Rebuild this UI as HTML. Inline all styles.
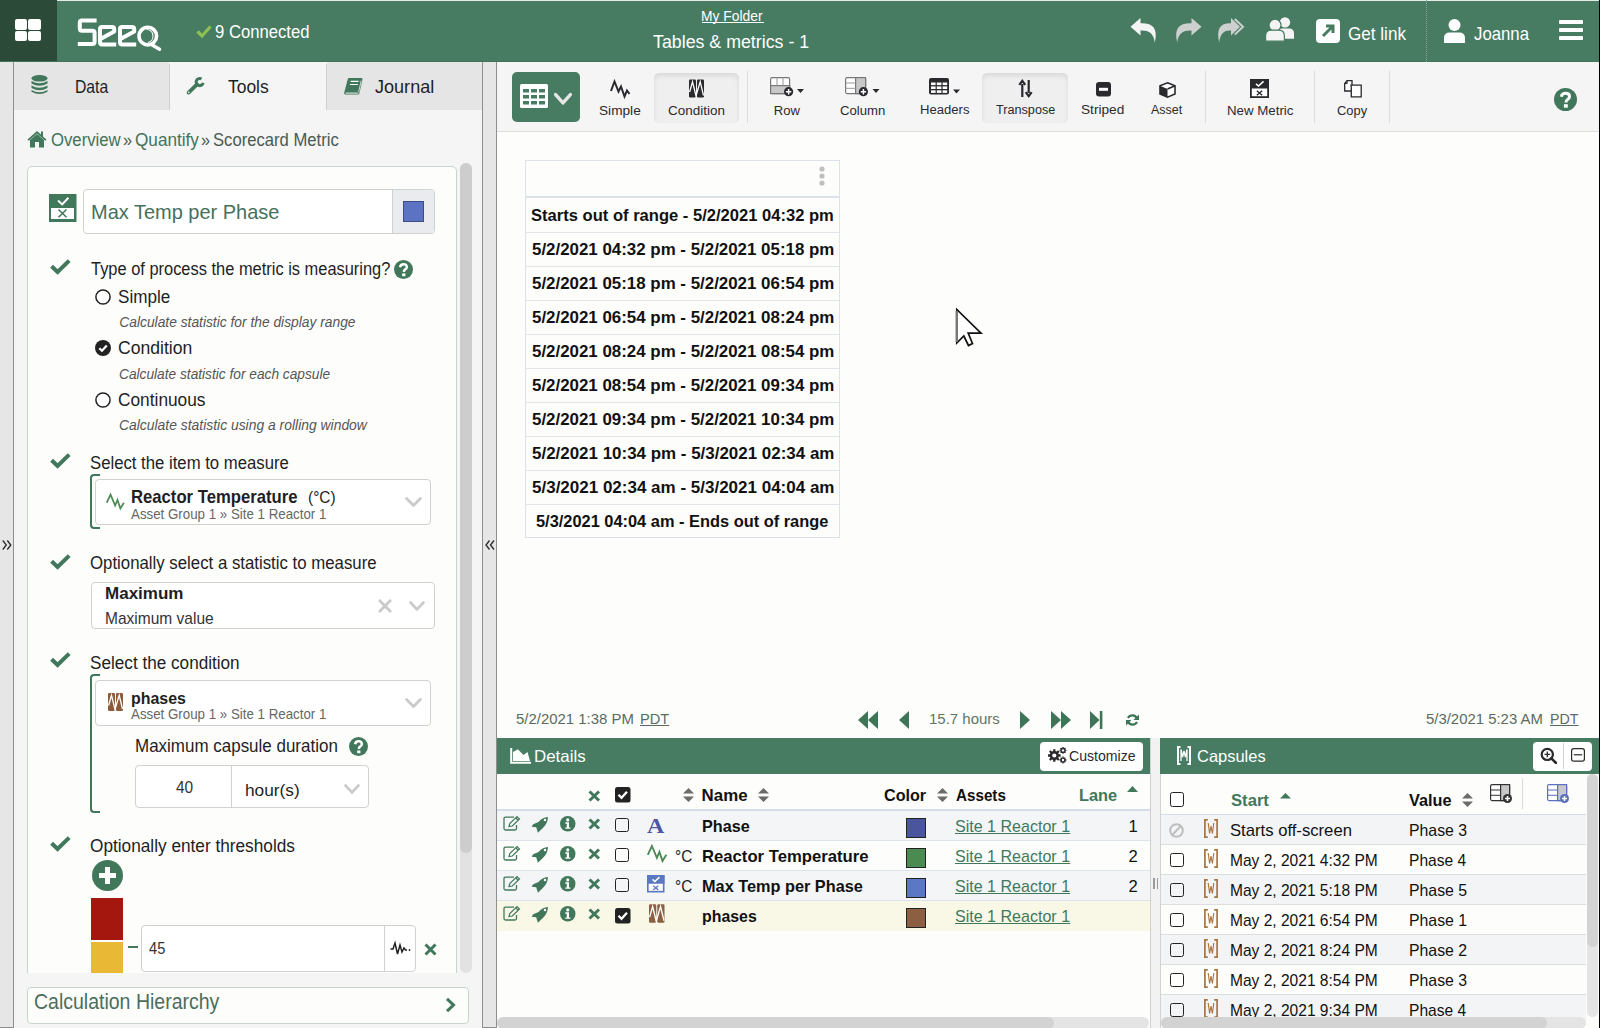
<!DOCTYPE html>
<html><head><meta charset="utf-8"><title>Seeq</title>
<style>
html,body{margin:0;padding:0;}
body{width:1600px;height:1028px;overflow:hidden;position:relative;background:#FDFDFB;font-family:"Liberation Sans",sans-serif;}

.ab{position:absolute;}
svg{position:absolute;overflow:visible;}

</style></head><body>
<div style="position:absolute;left:0px;top:0px;width:1600px;height:62px;background:#477C63;"></div>
<div style="position:absolute;left:0px;top:61px;width:1600px;height:1px;background:#3D7659;"></div>
<div style="position:absolute;left:0px;top:0px;width:1600px;height:1px;background:#E6EAE8;"></div>
<div style="position:absolute;left:0px;top:0px;width:57px;height:61px;background:#2B4A37;"></div>
<div style="position:absolute;left:15px;top:19px;width:12.4px;height:10.6px;background:#fff;border-radius:2px;"></div>
<div style="position:absolute;left:28.4px;top:19px;width:12.4px;height:10.6px;background:#fff;border-radius:2px;"></div>
<div style="position:absolute;left:15px;top:30.8px;width:12.4px;height:10.6px;background:#fff;border-radius:2px;"></div>
<div style="position:absolute;left:28.4px;top:30.8px;width:12.4px;height:10.6px;background:#fff;border-radius:2px;"></div>
<svg style="left:77px;top:18px" width="84" height="33" viewBox="0 0 84 33">
<g fill="none" stroke="#fff" stroke-width="4" stroke-linejoin="round">
<path d="M19.6 2.4 H5 Q2.8 2.4 2.8 4.6 V10.5 Q2.8 12.7 5 12.7 H15.4 Q17.6 12.7 17.6 14.9 V23.7 Q17.6 25.9 15.4 25.9 H0.8"/>
<path d="M23 21.2 L37.2 13.6 V11.2 Q37.2 9 35 9 H25.2 Q23 9 23 11.2 V24.2 Q23 26.4 25.2 26.4 H39.2"/>
<path d="M43 21.2 L57.2 13.6 V11.2 Q57.2 9 55 9 H45.2 Q43 9 43 11.2 V24.2 Q43 26.4 45.2 26.4 H59.2"/>
<circle cx="70.8" cy="18.1" r="8.8" stroke-width="3.6"/>
<path d="M74.5 26.5 L82.5 31.3" stroke-width="3.4" stroke-linecap="round"/>
<path d="M69.5 11.5 A 6.6 6.6 0 0 1 71 24.5" stroke-width="1.1"/>
</g>
</svg>
<svg style="left:196px;top:25px" width="16" height="13" viewBox="0 0 16 13"><path d="M1.5 6.5 L6 11 L14.5 1.5" fill="none" stroke="#8DC04F" stroke-width="3.2"/></svg>
<span style="position:absolute;left:215.06px;top:24.19px;white-space:nowrap;font-family:'Liberation Sans',sans-serif;font-size:17.73px;line-height:17.73px;color:#fff;font-weight:400;transform:scaleX(0.9394);transform-origin:left top;">9 Connected</span>
<span style="position:absolute;left:701.05px;top:9.39px;white-space:nowrap;font-family:'Liberation Sans',sans-serif;font-size:14.54px;line-height:14.54px;color:#fff;font-weight:400;transform:scaleX(0.9531);transform-origin:left top;">My Folder</span>
<div style="position:absolute;left:702px;top:22px;width:61.5px;height:1.2px;background:#fff;"></div>
<span style="position:absolute;left:653.00px;top:32.74px;white-space:nowrap;font-family:'Liberation Sans',sans-serif;font-size:18.02px;line-height:18.02px;color:#fff;font-weight:400;transform:scaleX(0.9873);transform-origin:left top;">Tables &amp; metrics - 1</span>
<svg style="left:1129px;top:17px" width="30" height="27" viewBox="0 0 30 27"><path d="M11.5 1 L1.5 9.8 L11.5 18.6 V13.6 C19.5 13.2 24.5 15.8 25.8 25.5 C29.2 11.5 24 5.8 11.5 6.2 Z" fill="#F4F4F4"/></svg>
<svg style="left:1173px;top:17px" width="30" height="27" viewBox="0 0 30 27"><path d="M18.5 1 L28.5 9.8 L18.5 18.6 V13.6 C10.5 13.2 5.5 15.8 4.2 25.5 C0.8 11.5 6 5.8 18.5 6.2 Z" fill="#CDD0CE"/></svg>
<svg style="left:1216px;top:17px" width="30" height="27" viewBox="0 0 30 27"><path d="M15 1 L24 9.8 L15 18.6 V13.6 C8.5 13.2 4.5 15.8 3.2 25.5 C0 11.5 4.5 5.8 15 6.2 Z" fill="#CDD0CE"/><path d="M18.8 2 L27 9.8 L18.8 17.6" fill="none" stroke="#CDD0CE" stroke-width="2"/></svg>
<svg style="left:1265px;top:16px" width="30" height="26" viewBox="0 0 30 26">
<circle cx="20" cy="6.4" r="5.2" fill="#F4F4F4"/><path d="M13 22.7 V17.5 Q13 12.6 18 12.6 H24 Q29 12.6 29 17.5 V22.7 Z" fill="#F4F4F4"/>
<circle cx="10" cy="9.2" r="6" fill="#F4F4F4" stroke="#477C63" stroke-width="1.2"/><path d="M0.6 25.2 V20 Q0.6 14.2 6.4 14.2 H13.6 Q19.4 14.2 19.4 20 V25.2 Z" fill="#F4F4F4" stroke="#477C63" stroke-width="1.2"/>
</svg>
<svg style="left:1316px;top:19px" width="24" height="24" viewBox="0 0 24 24"><rect x="0" y="0" width="24" height="24" rx="4" fill="#fff"/><path d="M7 17 L16 8 M10 7 H17 V14" fill="none" stroke="#477C63" stroke-width="3"/></svg>
<span style="position:absolute;left:1348.07px;top:25.09px;white-space:nowrap;font-family:'Liberation Sans',sans-serif;font-size:18.31px;line-height:18.31px;color:#fff;font-weight:400;transform:scaleX(0.9344);transform-origin:left top;">Get link</span>
<div style="position:absolute;left:1426px;top:0px;width:1px;height:62px;border-left:1px dotted #88A898;width:0;"></div>
<svg style="left:1444px;top:19px" width="21" height="24" viewBox="0 0 21 24"><circle cx="10.5" cy="6" r="6" fill="#fff"/><path d="M0 24 V19 Q0 13.5 6 13.5 H15 Q21 13.5 21 19 V24 Z" fill="#fff"/></svg>
<span style="position:absolute;left:1474.00px;top:25.09px;white-space:nowrap;font-family:'Liberation Sans',sans-serif;font-size:18.31px;line-height:18.31px;color:#fff;font-weight:400;transform:scaleX(0.9167);transform-origin:left top;">Joanna</span>
<div style="position:absolute;left:1559px;top:20px;width:24px;height:4px;background:#fff;border-radius:1px;"></div>
<div style="position:absolute;left:1559px;top:28px;width:24px;height:4px;background:#fff;border-radius:1px;"></div>
<div style="position:absolute;left:1559px;top:36px;width:24px;height:4px;background:#fff;border-radius:1px;"></div>
<div style="position:absolute;left:0px;top:62px;width:13px;height:966px;background:#E6E6E6;"></div>
<div style="position:absolute;left:13px;top:62px;width:1px;height:966px;background:#8E8E8E;"></div>
<div style="position:absolute;left:14px;top:62px;width:468px;height:966px;background:#F5F5F5;"></div>
<div style="position:absolute;left:482px;top:62px;width:1px;height:966px;background:#8E8E8E;"></div>
<div style="position:absolute;left:483px;top:62px;width:13px;height:966px;background:#E6E6E6;"></div>
<div style="position:absolute;left:496px;top:62px;width:1px;height:966px;background:#8E8E8E;"></div>
<div style="position:absolute;left:0px;top:1027px;width:14px;height:1px;background:#8E8E8E;"></div>
<div style="position:absolute;left:482px;top:1027px;width:15px;height:1px;background:#8E8E8E;"></div>
<svg style="left:1.5px;top:540px" width="10" height="10" viewBox="0 0 10 10"><path d="M0.8 0.5 L4.3 5 L0.8 9.5 M5.3 0.5 L8.8 5 L5.3 9.5" fill="none" stroke="#2A2A2E" stroke-width="1.3"/></svg>
<svg style="left:484.5px;top:540px" width="10" height="10" viewBox="0 0 10 10"><path d="M4.5 0.5 L1 5 L4.5 9.5 M9 0.5 L5.5 5 L9 9.5" fill="none" stroke="#2A2A2E" stroke-width="1.3"/></svg>
<div style="position:absolute;left:14px;top:62px;width:156px;height:48px;background:#E5E5E5;border-radius:3px 3px 0 0;"></div>
<div style="position:absolute;left:170px;top:62px;width:156px;height:48px;background:#F5F5F5;"></div>
<div style="position:absolute;left:326px;top:62px;width:156px;height:48px;background:#E5E5E5;border-radius:3px 3px 0 0;"></div>
<div style="position:absolute;left:169px;top:64px;width:1px;height:46px;background:#D0D0D0;"></div>
<div style="position:absolute;left:326px;top:64px;width:1px;height:46px;background:#D0D0D0;"></div>
<svg style="left:31px;top:75px" width="17" height="20" viewBox="0 0 17 20"><g fill="#41785B"><ellipse cx="8.5" cy="3.3" rx="8" ry="3.3"/><path d="M0.5 6 Q8.5 10.5 16.5 6 V8.5 Q8.5 13 0.5 8.5Z"/><path d="M0.5 10.5 Q8.5 15 16.5 10.5 V13 Q8.5 17.5 0.5 13Z"/><path d="M0.5 15 Q8.5 19.5 16.5 15 V16.8 Q8.5 21.3 0.5 16.8Z"/></g></svg>
<span style="position:absolute;left:75.10px;top:79.23px;white-space:nowrap;font-family:'Liberation Sans',sans-serif;font-size:17.44px;line-height:17.44px;color:#1E1E24;font-weight:400;transform:scaleX(0.9028);transform-origin:left top;">Data</span>
<svg style="left:186px;top:76.5px" width="19" height="18" viewBox="0 0 19 18"><path d="M2.6 15.6 L11 7.4" stroke="#41785B" stroke-width="3.8" stroke-linecap="round"/><path d="M15.5 1.9 A3.6 3.6 0 1 0 17.2 5.9" fill="none" stroke="#41785B" stroke-width="3"/><circle cx="2.8" cy="15.4" r="0.8" fill="#F4F4F4"/></svg>
<span style="position:absolute;left:228.00px;top:79.23px;white-space:nowrap;font-family:'Liberation Sans',sans-serif;font-size:17.44px;line-height:17.44px;color:#1E1E24;font-weight:400;">Tools</span>
<svg style="left:343px;top:77px" width="21" height="19" viewBox="0 0 21 19"><path d="M6 1 H18.5 Q19.8 1.2 19.4 3 L16.3 16.5 Q16 17.6 14.8 17.6 H2.4 Q0.8 17.6 1.2 15.8 L4.8 2 Q5.1 1 6 1Z" fill="#41785B"/><path d="M2.6 16.1 H15.2" stroke="#F2F2F2" stroke-width="1"/><path d="M15.6 15.2 L18.2 3.6" stroke="#E5E5E5" stroke-width="0.9"/><path d="M7.6 4.4 H15.6 M6.9 7.5 H14.9" stroke="#fff" stroke-width="1.1"/></svg>
<span style="position:absolute;left:375.00px;top:79.23px;white-space:nowrap;font-family:'Liberation Sans',sans-serif;font-size:17.44px;line-height:17.44px;color:#1E1E24;font-weight:400;transform:scaleX(1.0357);transform-origin:left top;">Journal</span>
<svg style="left:27px;top:130px" width="20" height="18" viewBox="0 0 20 18"><path d="M10 1 L0.5 9.5 L1.8 10.8 L10 3.5 L18.2 10.8 L19.5 9.5 L16 6.4 V1.5 H14 V4.6Z" fill="#41785B"/><path d="M3 10 L10 4 L17 10 V17.5 H12 V12 H8 V17.5 H3Z" fill="#41785B"/></svg>
<span style="position:absolute;left:50.54px;top:131.73px;white-space:nowrap;font-family:'Liberation Sans',sans-serif;font-size:17.44px;line-height:17.44px;color:#43735B;font-weight:400;transform:scaleX(0.9583);transform-origin:left top;">Overview</span>
<span style="position:absolute;left:123.06px;top:131.73px;white-space:nowrap;font-family:'Liberation Sans',sans-serif;font-size:17.44px;line-height:17.44px;color:#4A5A52;font-weight:400;transform:scaleX(0.9375);transform-origin:left top;">&raquo;</span>
<span style="position:absolute;left:135.02px;top:131.73px;white-space:nowrap;font-family:'Liberation Sans',sans-serif;font-size:17.44px;line-height:17.44px;color:#43735B;font-weight:400;transform:scaleX(0.9844);transform-origin:left top;">Quantify</span>
<span style="position:absolute;left:201.06px;top:131.73px;white-space:nowrap;font-family:'Liberation Sans',sans-serif;font-size:17.44px;line-height:17.44px;color:#4A5A52;font-weight:400;transform:scaleX(0.9375);transform-origin:left top;">&raquo;</span>
<span style="position:absolute;left:213.05px;top:131.73px;white-space:nowrap;font-family:'Liberation Sans',sans-serif;font-size:17.44px;line-height:17.44px;color:#4A5A52;font-weight:400;transform:scaleX(0.9538);transform-origin:left top;">Scorecard Metric</span>
<div style="position:absolute;left:27px;top:166px;width:430px;height:900px;background:#FDFDFB;border:1px solid #C6D6CE;border-radius:5px;box-sizing:border-box;"></div>
<div style="position:absolute;left:14px;top:973px;width:468px;height:55px;background:#F5F5F5;"></div>
<div style="position:absolute;left:460px;top:163px;width:12px;height:810px;background:#E2E2E2;border-radius:6px;"></div>
<div style="position:absolute;left:460px;top:163px;width:12px;height:690px;background:#CDCDCD;border-radius:6px;"></div>
<svg style="left:49px;top:194px" width="27.5" height="28" viewBox="0 0 27.5 28"><rect x="0" y="0" width="27.5" height="28" fill="#41785B"/><rect x="2" y="14" width="23" height="11" fill="#fff"/><path d="M9 6.6 L13.2 10.4 L19.4 3.8" fill="none" stroke="#fff" stroke-width="2"/><path d="M9.5 15.5 L17.5 23.3 M17.5 15.5 L9.5 23.3" stroke="#41785B" stroke-width="1.6"/></svg>
<div style="position:absolute;left:83px;top:189px;width:352px;height:45px;background:#fff;border:1px solid #CFD3D0;border-radius:4px;box-sizing:border-box;"></div>
<div style="position:absolute;left:392px;top:190px;width:42px;height:43px;background:#E9EBEE;border-left:1px solid #CFD3D0;border-radius:0 3px 3px 0;box-sizing:border-box;"></div>
<div style="position:absolute;left:403px;top:201px;width:21px;height:21px;background:#5B73C2;border:1px solid #3D4E85;box-sizing:border-box;"></div>
<span style="position:absolute;left:91.03px;top:202.12px;white-space:nowrap;font-family:'Liberation Sans',sans-serif;font-size:20.64px;line-height:20.64px;color:#46705C;font-weight:400;transform:scaleX(0.9689);transform-origin:left top;">Max Temp per Phase</span>
<svg style="left:49.5px;top:258.5px" width="21" height="16" viewBox="0 0 21 16"><path d="M1.6 7.2 L7.6 13 L19.2 1.6" fill="none" stroke="#41785B" stroke-width="4"/></svg>
<span style="position:absolute;left:90.50px;top:261.23px;white-space:nowrap;font-family:'Liberation Sans',sans-serif;font-size:17.44px;line-height:17.44px;color:#1E1E24;font-weight:400;transform:scaleX(0.9418);transform-origin:left top;">Type of process the metric is measuring?</span>
<svg style="left:394px;top:260px" width="19" height="19" viewBox="0 0 20 20"><circle cx="10" cy="10" r="10" fill="#41785B"/><path d="M6.4 7.6 Q6.8 4.5 10.1 4.5 Q13.5 4.5 13.5 7.3 Q13.5 9.1 11.6 10.2 Q10.4 10.9 10.4 12.6" fill="none" stroke="#fff" stroke-width="2.6"/><rect x="8.6" y="14.1" width="3.4" height="3" fill="#fff"/></svg>
<svg style="left:94.5px;top:288.5px" width="16" height="16" viewBox="0 0 16 16"><circle cx="8" cy="8" r="7.1" fill="#fff" stroke="#222" stroke-width="1.5"/></svg>
<span style="position:absolute;left:118.02px;top:288.83px;white-space:nowrap;font-family:'Liberation Sans',sans-serif;font-size:17.44px;line-height:17.44px;color:#1E1E24;font-weight:400;transform:scaleX(0.9808);transform-origin:left top;">Simple</span>
<span style="position:absolute;left:119.30px;top:315.91px;white-space:nowrap;font-family:'Liberation Sans',sans-serif;font-size:13.81px;line-height:13.81px;color:#555;font-weight:400;font-style:italic;">Calculate statistic for the display range</span>
<svg style="left:94.5px;top:339.5px" width="16" height="16" viewBox="0 0 16 16"><circle cx="8" cy="8" r="8" fill="#222"/><path d="M4.3 8.2 L7 10.8 L11.8 5.6" fill="none" stroke="#fff" stroke-width="2.2"/></svg>
<span style="position:absolute;left:117.99px;top:339.93px;white-space:nowrap;font-family:'Liberation Sans',sans-serif;font-size:17.44px;line-height:17.44px;color:#1E1E24;font-weight:400;transform:scaleX(1.0083);transform-origin:left top;">Condition</span>
<span style="position:absolute;left:119.31px;top:367.91px;white-space:nowrap;font-family:'Liberation Sans',sans-serif;font-size:13.81px;line-height:13.81px;color:#555;font-weight:400;font-style:italic;transform:scaleX(0.9938);transform-origin:left top;">Calculate statistic for each capsule</span>
<svg style="left:94.5px;top:391.5px" width="16" height="16" viewBox="0 0 16 16"><circle cx="8" cy="8" r="7.1" fill="#fff" stroke="#222" stroke-width="1.5"/></svg>
<span style="position:absolute;left:118.01px;top:391.83px;white-space:nowrap;font-family:'Liberation Sans',sans-serif;font-size:17.44px;line-height:17.44px;color:#1E1E24;font-weight:400;transform:scaleX(0.9920);transform-origin:left top;">Continuous</span>
<span style="position:absolute;left:119.29px;top:419.31px;white-space:nowrap;font-family:'Liberation Sans',sans-serif;font-size:13.81px;line-height:13.81px;color:#555;font-weight:400;font-style:italic;transform:scaleX(1.0069);transform-origin:left top;">Calculate statistic using a rolling window</span>
<svg style="left:49.5px;top:452.5px" width="21" height="16" viewBox="0 0 21 16"><path d="M1.6 7.2 L7.6 13 L19.2 1.6" fill="none" stroke="#41785B" stroke-width="4"/></svg>
<span style="position:absolute;left:89.54px;top:454.93px;white-space:nowrap;font-family:'Liberation Sans',sans-serif;font-size:17.44px;line-height:17.44px;color:#1E1E24;font-weight:400;transform:scaleX(0.9587);transform-origin:left top;">Select the item to measure</span>
<div style="position:absolute;left:90px;top:474px;width:10px;height:55px;border:2px solid #41785B;border-right:none;border-radius:4px 0 0 4px;box-sizing:border-box;"></div>
<div style="position:absolute;left:94.5px;top:478.5px;width:336px;height:46px;background:#fff;border:1px solid #CFD3D0;border-radius:4px;box-sizing:border-box;"></div>
<svg style="left:106px;top:492.5px" width="18.5" height="17" viewBox="0 0 20 17"><path d="M0.8 9.8 L4.9 1 L9.9 12.8 L12.4 6.9 L15.5 16 L19.3 9.8" fill="none" stroke="#4D8A55" stroke-width="1.9"/></svg>
<span style="position:absolute;left:131.09px;top:487.69px;white-space:nowrap;font-family:'Liberation Sans',sans-serif;font-size:18.31px;line-height:18.31px;color:#1E1E24;font-weight:700;transform:scaleX(0.9116);transform-origin:left top;">Reactor Temperature</span>
<span style="position:absolute;left:307.50px;top:488.98px;white-space:nowrap;font-family:'Liberation Sans',sans-serif;font-size:17.15px;line-height:17.15px;color:#1E1E24;font-weight:400;transform:scaleX(0.9000);transform-origin:left top;">(°C)</span>
<span style="position:absolute;left:131.30px;top:506.35px;white-space:nowrap;font-family:'Liberation Sans',sans-serif;font-size:15.41px;line-height:15.41px;color:#666;font-weight:400;transform:scaleX(0.8642);transform-origin:left top;">Asset Group 1 &raquo; Site 1 Reactor 1</span>
<svg style="left:404.5px;top:497px" width="17" height="10" viewBox="0 0 17 10"><path d="M1.6 1.6 L8.5 8.4 L15.4 1.6" fill="none" stroke="#CACACA" stroke-width="2.8" stroke-linecap="round" stroke-linejoin="round"/></svg>
<svg style="left:49.5px;top:553.5px" width="21" height="16" viewBox="0 0 21 16"><path d="M1.6 7.2 L7.6 13 L19.2 1.6" fill="none" stroke="#41785B" stroke-width="4"/></svg>
<span style="position:absolute;left:89.54px;top:555.23px;white-space:nowrap;font-family:'Liberation Sans',sans-serif;font-size:17.44px;line-height:17.44px;color:#1E1E24;font-weight:400;transform:scaleX(0.9632);transform-origin:left top;">Optionally select a statistic to measure</span>
<div style="position:absolute;left:90.5px;top:582px;width:344px;height:47px;background:#fff;border:1px solid #CFD3D0;border-radius:4px;box-sizing:border-box;"></div>
<span style="position:absolute;left:104.61px;top:585.08px;white-space:nowrap;font-family:'Liberation Sans',sans-serif;font-size:17.15px;line-height:17.15px;color:#1E1E24;font-weight:700;transform:scaleX(0.9922);transform-origin:left top;">Maximum</span>
<span style="position:absolute;left:104.61px;top:611.11px;white-space:nowrap;font-family:'Liberation Sans',sans-serif;font-size:15.70px;line-height:15.70px;color:#333;font-weight:400;transform:scaleX(0.9898);transform-origin:left top;">Maximum value</span>
<svg style="left:377.5px;top:598.5px" width="14" height="14" viewBox="0 0 14 14"><path d="M1.8 1.8 L12.2 12.2 M12.2 1.8 L1.8 12.2" stroke="#CACACA" stroke-width="2.8" stroke-linecap="round"/></svg>
<svg style="left:409px;top:601px" width="16" height="10" viewBox="0 0 16 10"><path d="M1.6 1.6 L8.0 8.4 L14.4 1.6" fill="none" stroke="#CACACA" stroke-width="2.8" stroke-linecap="round" stroke-linejoin="round"/></svg>
<svg style="left:49.5px;top:651.5px" width="21" height="16" viewBox="0 0 21 16"><path d="M1.6 7.2 L7.6 13 L19.2 1.6" fill="none" stroke="#41785B" stroke-width="4"/></svg>
<span style="position:absolute;left:89.52px;top:654.93px;white-space:nowrap;font-family:'Liberation Sans',sans-serif;font-size:17.44px;line-height:17.44px;color:#1E1E24;font-weight:400;transform:scaleX(0.9833);transform-origin:left top;">Select the condition</span>
<div style="position:absolute;left:90px;top:674px;width:10px;height:139px;border:2px solid #41785B;border-right:none;border-radius:4px 0 0 4px;box-sizing:border-box;"></div>
<div style="position:absolute;left:94.5px;top:679.5px;width:336px;height:46px;background:#fff;border:1px solid #CFD3D0;border-radius:4px;box-sizing:border-box;"></div>
<svg style="left:108px;top:693px" width="15" height="18" viewBox="0 0 15 18"><rect x="0" y="0" width="7" height="18" rx="1.3" fill="#8D5B3A"/><rect x="8" y="0" width="7" height="18" rx="1.3" fill="#8D5B3A"/><path d="M0.6 12.5 L3.5 2.2 L7 16.5 L8.3 12 L11.2 2.2 L14.5 16" fill="none" stroke="#fff" stroke-width="1.3"/></svg>
<span style="position:absolute;left:131.07px;top:689.88px;white-space:nowrap;font-family:'Liberation Sans',sans-serif;font-size:17.15px;line-height:17.15px;color:#1E1E24;font-weight:700;transform:scaleX(0.9310);transform-origin:left top;">phases</span>
<span style="position:absolute;left:131.30px;top:705.85px;white-space:nowrap;font-family:'Liberation Sans',sans-serif;font-size:15.41px;line-height:15.41px;color:#666;font-weight:400;transform:scaleX(0.8642);transform-origin:left top;">Asset Group 1 &raquo; Site 1 Reactor 1</span>
<svg style="left:404.5px;top:697.5px" width="17" height="10" viewBox="0 0 17 10"><path d="M1.6 1.6 L8.5 8.4 L15.4 1.6" fill="none" stroke="#CACACA" stroke-width="2.8" stroke-linecap="round" stroke-linejoin="round"/></svg>
<span style="position:absolute;left:135.03px;top:737.83px;white-space:nowrap;font-family:'Liberation Sans',sans-serif;font-size:17.44px;line-height:17.44px;color:#1E1E24;font-weight:400;transform:scaleX(0.9734);transform-origin:left top;">Maximum capsule duration</span>
<svg style="left:348.5px;top:737px" width="19" height="19" viewBox="0 0 20 20"><circle cx="10" cy="10" r="10" fill="#41785B"/><path d="M6.4 7.6 Q6.8 4.5 10.1 4.5 Q13.5 4.5 13.5 7.3 Q13.5 9.1 11.6 10.2 Q10.4 10.9 10.4 12.6" fill="none" stroke="#fff" stroke-width="2.6"/><rect x="8.6" y="14.1" width="3.4" height="3" fill="#fff"/></svg>
<div style="position:absolute;left:134.8px;top:764.5px;width:234.2px;height:43px;background:#fff;border:1px solid #CFD3D0;border-radius:4px;box-sizing:border-box;"></div>
<div style="position:absolute;left:231px;top:765px;width:1px;height:42px;background:#CFD3D0;"></div>
<span style="position:absolute;left:175.60px;top:780.12px;white-space:nowrap;font-family:'Liberation Sans',sans-serif;font-size:16.86px;line-height:16.86px;color:#333;font-weight:400;transform:scaleX(0.9158);transform-origin:left top;">40</span>
<span style="position:absolute;left:244.99px;top:782.08px;white-space:nowrap;font-family:'Liberation Sans',sans-serif;font-size:17.15px;line-height:17.15px;color:#1E1E24;font-weight:400;transform:scaleX(1.0077);transform-origin:left top;">hour(s)</span>
<svg style="left:343.5px;top:784px" width="16" height="10" viewBox="0 0 16 10"><path d="M1.6 1.6 L8.0 8.4 L14.4 1.6" fill="none" stroke="#CACACA" stroke-width="2.8" stroke-linecap="round" stroke-linejoin="round"/></svg>
<svg style="left:49.5px;top:836.0px" width="21" height="16" viewBox="0 0 21 16"><path d="M1.6 7.2 L7.6 13 L19.2 1.6" fill="none" stroke="#41785B" stroke-width="4"/></svg>
<span style="position:absolute;left:89.51px;top:838.23px;white-space:nowrap;font-family:'Liberation Sans',sans-serif;font-size:17.44px;line-height:17.44px;color:#1E1E24;font-weight:400;transform:scaleX(0.9879);transform-origin:left top;">Optionally enter thresholds</span>
<svg style="left:91.5px;top:860px" width="31" height="31" viewBox="0 0 31 31"><circle cx="15.5" cy="15.5" r="15.5" fill="#41785B"/><path d="M15.5 7 V24 M7 15.5 H24" stroke="#fff" stroke-width="5"/></svg>
<div style="position:absolute;left:90.5px;top:898px;width:32.5px;height:41.5px;background:#A3170F;"></div>
<div style="position:absolute;left:90.5px;top:941.5px;width:32.5px;height:40px;background:#E9B935;"></div>
<div style="position:absolute;left:127.5px;top:946px;width:10.5px;height:2.2px;background:#41785B;"></div>
<div style="position:absolute;left:141.3px;top:925px;width:275px;height:46.5px;background:#fff;border:1px solid #CFD3D0;border-radius:4px;box-sizing:border-box;"></div>
<div style="position:absolute;left:383.5px;top:925.5px;width:1px;height:45.5px;background:#CFD3D0;"></div>
<span style="position:absolute;left:149.40px;top:940.92px;white-space:nowrap;font-family:'Liberation Sans',sans-serif;font-size:16.86px;line-height:16.86px;color:#333;font-weight:400;transform:scaleX(0.8667);transform-origin:left top;">45</span>
<svg style="left:390px;top:940px" width="22" height="16" viewBox="0 0 22 16"><path d="M0.5 9 H3 L5 3 L7.5 14 L10 5 L12 12 L14 8 L15.5 10 H17" fill="none" stroke="#222" stroke-width="1.5"/><circle cx="19.5" cy="10" r="0.9" fill="#222"/></svg>
<svg style="left:423.5px;top:942.5px" width="13" height="13" viewBox="0 0 13 13"><path d="M1.5 1.5 L11.5 11.5 M11.5 1.5 L1.5 11.5" stroke="#41785B" stroke-width="3"/></svg>
<div style="position:absolute;left:14px;top:973px;width:446px;height:55px;background:#F5F5F5;"></div>
<div style="position:absolute;left:27px;top:987px;width:442px;height:37px;background:#FDFDFB;border:1px solid #C6D6CE;border-radius:4px;box-sizing:border-box;"></div>
<span style="position:absolute;left:34.38px;top:991.43px;white-space:nowrap;font-family:'Liberation Sans',sans-serif;font-size:21.22px;line-height:21.22px;color:#4A6E5E;font-weight:400;transform:scaleX(0.9189);transform-origin:left top;">Calculation Hierarchy</span>
<svg style="left:445px;top:997px" width="11" height="16" viewBox="0 0 11 16"><path d="M2 1.8 L8.5 8 L2 14.2" fill="none" stroke="#41785B" stroke-width="3"/></svg>
<div style="position:absolute;left:497px;top:62px;width:1103px;height:69px;background:#F5F5F6;"></div>
<div style="position:absolute;left:497px;top:131px;width:1103px;height:1px;background:#DEDEDE;"></div>
<div style="position:absolute;left:512px;top:72px;width:68px;height:50px;background:#477C63;border-radius:5px;"></div>
<svg style="left:520px;top:84px" width="28" height="24" viewBox="0 0 28 24"><rect x="0" y="0" width="28" height="24" rx="1.5" fill="#fff"/><g fill="#477C63"><rect x="3" y="5" width="6" height="3.5"/><rect x="11" y="5" width="6" height="3.5"/><rect x="19" y="5" width="6" height="3.5"/><rect x="3" y="11" width="6" height="3.5"/><rect x="11" y="11" width="6" height="3.5"/><rect x="19" y="11" width="6" height="3.5"/><rect x="3" y="17" width="6" height="3.5"/><rect x="11" y="17" width="6" height="3.5"/><rect x="19" y="17" width="6" height="3.5"/></g></svg>
<svg style="left:554px;top:92.5px" width="18" height="11.5" viewBox="0 0 18 11.5"><path d="M1.6 1.6 L9.0 9.9 L16.4 1.6" fill="none" stroke="#E6E6E6" stroke-width="3.4" stroke-linecap="round" stroke-linejoin="round"/></svg>
<div style="position:absolute;left:654px;top:72.5px;width:85px;height:50px;background:#EFEFEF;border-radius:5px;box-shadow:inset 0 3px 5px rgba(0,0,0,0.09);"></div>
<div style="position:absolute;left:982px;top:72.5px;width:86px;height:50px;background:#EFEFEF;border-radius:5px;box-shadow:inset 0 3px 5px rgba(0,0,0,0.09);"></div>
<div style="position:absolute;left:747px;top:71px;width:1px;height:52px;background:#DDDDDD;"></div>
<div style="position:absolute;left:1205px;top:71px;width:1px;height:52px;background:#DDDDDD;"></div>
<div style="position:absolute;left:1314px;top:71px;width:1px;height:52px;background:#DDDDDD;"></div>
<div style="position:absolute;left:1389px;top:71px;width:1px;height:52px;background:#DDDDDD;"></div>
<svg style="left:610px;top:80px" width="21" height="18" viewBox="0 0 21 18"><path d="M1 11 L4.5 1.5 L8.5 11.5 L11 6.5 L14.5 16.5 L17 10.5 L19.5 14" fill="none" stroke="#2A2A2E" stroke-width="2"/></svg>
<span style="position:absolute;left:599.36px;top:103.72px;white-space:nowrap;font-family:'Liberation Sans',sans-serif;font-size:13.08px;line-height:13.08px;color:#2A2A2E;font-weight:400;transform:scaleX(1.0436);transform-origin:left top;">Simple</span>
<svg style="left:689px;top:79px" width="15" height="19" viewBox="0 0 15 18"><rect x="0" y="0" width="7" height="18" rx="1.3" fill="#2A2A2E"/><rect x="8" y="0" width="7" height="18" rx="1.3" fill="#2A2A2E"/><path d="M0.6 12.5 L3.5 2.2 L7 16.5 L8.3 12 L11.2 2.2 L14.5 16" fill="none" stroke="#fff" stroke-width="1.3"/></svg>
<span style="position:absolute;left:668.40px;top:103.72px;white-space:nowrap;font-family:'Liberation Sans',sans-serif;font-size:13.08px;line-height:13.08px;color:#2A2A2E;font-weight:400;transform:scaleX(1.0309);transform-origin:left top;">Condition</span>
<svg style="left:770px;top:77px" width="36" height="20" viewBox="0 0 36 20"><rect x="0.6" y="0.6" width="19" height="16" rx="1.5" fill="#fff" stroke="#777" stroke-width="1.2"/><rect x="0.6" y="8.6" width="19" height="8" fill="#C8C8C8" stroke="#777" stroke-width="1.2"/><path d="M7 0.6 V8.6 M13 0.6 V8.6" stroke="#999" stroke-width="1"/><circle cx="18.6" cy="14.7" r="4.6" fill="#2A2A2E"/><path d="M18.6 12 V17.4 M15.9 14.7 H21.3" stroke="#fff" stroke-width="1.5"/><path d="M27 12 L34 12 L30.5 16Z" fill="#2A2A2E"/></svg>
<span style="position:absolute;left:773.80px;top:103.62px;white-space:nowrap;font-family:'Liberation Sans',sans-serif;font-size:13.08px;line-height:13.08px;color:#2A2A2E;font-weight:400;">Row</span>
<svg style="left:845px;top:77px" width="36" height="20" viewBox="0 0 36 20"><rect x="0.6" y="0.6" width="20" height="16" rx="1.5" fill="#fff" stroke="#777" stroke-width="1.2"/><rect x="10.6" y="0.6" width="10" height="16" fill="#C8C8C8" stroke="#777" stroke-width="1.2"/><path d="M0.6 6 H10.6 M0.6 11.3 H10.6" stroke="#999" stroke-width="1"/><circle cx="18.4" cy="14.7" r="4.6" fill="#2A2A2E"/><path d="M18.4 12 V17.4 M15.7 14.7 H21.1" stroke="#fff" stroke-width="1.5"/><path d="M27.5 12 L34.5 12 L31 16Z" fill="#2A2A2E"/></svg>
<span style="position:absolute;left:839.90px;top:103.62px;white-space:nowrap;font-family:'Liberation Sans',sans-serif;font-size:13.08px;line-height:13.08px;color:#2A2A2E;font-weight:400;transform:scaleX(1.0044);transform-origin:left top;">Column</span>
<svg style="left:929px;top:77.5px" width="32" height="17" viewBox="0 0 32 17"><rect x="0" y="0" width="20" height="16.5" rx="2" fill="#2A2A2E"/><g fill="#fff"><rect x="2" y="4.5" width="4.6" height="2.6"/><rect x="7.8" y="4.5" width="4.6" height="2.6"/><rect x="13.6" y="4.5" width="4.6" height="2.6"/><rect x="2" y="8.4" width="4.6" height="2.6"/><rect x="7.8" y="8.4" width="4.6" height="2.6"/><rect x="13.6" y="8.4" width="4.6" height="2.6"/><rect x="2" y="12.3" width="4.6" height="2.6"/><rect x="7.8" y="12.3" width="4.6" height="2.6"/><rect x="13.6" y="12.3" width="4.6" height="2.6"/></g><path d="M24 11.5 L31 11.5 L27.5 15.5Z" fill="#2A2A2E"/></svg>
<span style="position:absolute;left:920.00px;top:102.92px;white-space:nowrap;font-family:'Liberation Sans',sans-serif;font-size:13.08px;line-height:13.08px;color:#2A2A2E;font-weight:400;">Headers</span>
<svg style="left:1019px;top:80px" width="13" height="17" viewBox="0 0 13 17"><path d="M3.3 17 V4 M0.3 4.8 L3.3 0.8 L6.3 4.8" fill="none" stroke="#2A2A2E" stroke-width="2.2"/><path d="M9.7 0 V13 M6.7 12.2 L9.7 16.2 L12.7 12.2" fill="none" stroke="#2A2A2E" stroke-width="2.2"/></svg>
<span style="position:absolute;left:995.90px;top:102.72px;white-space:nowrap;font-family:'Liberation Sans',sans-serif;font-size:13.08px;line-height:13.08px;color:#2A2A2E;font-weight:400;transform:scaleX(0.9672);transform-origin:left top;">Transpose</span>
<svg style="left:1096px;top:81.5px" width="15" height="14.5" viewBox="0 0 15 14.5"><rect x="0" y="0" width="15" height="14.5" rx="3" fill="#2A2A2E"/><rect x="3" y="5.8" width="9" height="3" fill="#fff"/></svg>
<span style="position:absolute;left:1081.26px;top:102.72px;white-space:nowrap;font-family:'Liberation Sans',sans-serif;font-size:13.08px;line-height:13.08px;color:#2A2A2E;font-weight:400;transform:scaleX(1.0450);transform-origin:left top;">Striped</span>
<svg style="left:1158.5px;top:81.5px" width="17" height="16" viewBox="0 0 17 16"><path d="M8.5 0.8 L16 3.8 V12 L8.5 15.2 L1 12 V3.8 Z" fill="#fff" stroke="#2A2A2E" stroke-width="1.6"/><path d="M1 3.8 L8.5 7 V15.2 L1 12Z" fill="#2A2A2E"/><path d="M8.5 7 L16 3.8" stroke="#2A2A2E" stroke-width="1.6"/></svg>
<span style="position:absolute;left:1151.40px;top:102.72px;white-space:nowrap;font-family:'Liberation Sans',sans-serif;font-size:13.08px;line-height:13.08px;color:#2A2A2E;font-weight:400;transform:scaleX(0.9515);transform-origin:left top;">Asset</span>
<svg style="left:1250px;top:79px" width="19" height="19" viewBox="0 0 19 19"><rect x="0.9" y="0.9" width="17.2" height="17.2" fill="#fff" stroke="#2A2A2E" stroke-width="1.8"/><rect x="0" y="0" width="19" height="9.5" fill="#2A2A2E"/><path d="M6 4.8 L8.5 7 L13.5 2.3" fill="none" stroke="#fff" stroke-width="1.6"/><path d="M6.8 11.8 L12.2 16.2 M12.2 11.8 L6.8 16.2" stroke="#2A2A2E" stroke-width="1.4"/></svg>
<span style="position:absolute;left:1226.88px;top:103.82px;white-space:nowrap;font-family:'Liberation Sans',sans-serif;font-size:13.08px;line-height:13.08px;color:#2A2A2E;font-weight:400;transform:scaleX(1.0156);transform-origin:left top;">New Metric</span>
<svg style="left:1343.5px;top:80px" width="18" height="17.5" viewBox="0 0 18 17.5"><path d="M3 0.7 H8 V11 H0.7 V3.5 Z" fill="#fff" stroke="#2A2A2E" stroke-width="1.3"/><path d="M7 5.2 H12 L17.2 5.2 V16.8 H7.3 V8 Z" fill="#fff" stroke="#2A2A2E" stroke-width="1.3"/><path d="M0.7 3.5 H3 V0.7" fill="none" stroke="#2A2A2E" stroke-width="1.2"/></svg>
<span style="position:absolute;left:1336.90px;top:103.82px;white-space:nowrap;font-family:'Liberation Sans',sans-serif;font-size:13.08px;line-height:13.08px;color:#2A2A2E;font-weight:400;transform:scaleX(0.9871);transform-origin:left top;">Copy</span>
<svg style="left:1554px;top:88px" width="23" height="23" viewBox="0 0 20 20"><circle cx="10" cy="10" r="10" fill="#41785B"/><path d="M6.4 7.6 Q6.8 4.5 10.1 4.5 Q13.5 4.5 13.5 7.3 Q13.5 9.1 11.6 10.2 Q10.4 10.9 10.4 12.6" fill="none" stroke="#fff" stroke-width="2.6"/><rect x="8.6" y="14.1" width="3.4" height="3" fill="#fff"/></svg>
<div style="position:absolute;left:497px;top:132px;width:1103px;height:606px;background:#FDFDFB;"></div>
<div style="position:absolute;left:524.5px;top:160px;width:315px;height:378px;background:#FDFDFB;border:1px solid #DCE2E8;box-sizing:border-box;"></div>
<div style="position:absolute;left:525px;top:196px;width:314px;height:2px;background:#DCE2E8;"></div>
<svg style="left:817.5px;top:166px" width="8" height="20" viewBox="0 0 8 20"><circle cx="4" cy="3" r="2.6" fill="#BFBFBF"/><circle cx="4" cy="10" r="2.6" fill="#BFBFBF"/><circle cx="4" cy="17" r="2.6" fill="#BFBFBF"/></svg>
<span style="position:absolute;left:530.53px;top:207.48px;white-space:nowrap;font-family:'Liberation Sans',sans-serif;font-size:17.15px;line-height:17.15px;color:#111;font-weight:700;transform:scaleX(0.9663);transform-origin:left top;">Starts out of range - 5/2/2021 04:32 pm</span>
<div style="position:absolute;left:525px;top:231.5px;width:314px;height:1px;background:#E2E6EA;"></div>
<span style="position:absolute;left:531.50px;top:241.48px;white-space:nowrap;font-family:'Liberation Sans',sans-serif;font-size:17.15px;line-height:17.15px;color:#111;font-weight:700;transform:scaleX(0.9853);transform-origin:left top;">5/2/2021 04:32 pm - 5/2/2021 05:18 pm</span>
<div style="position:absolute;left:525px;top:265.5px;width:314px;height:1px;background:#E2E6EA;"></div>
<span style="position:absolute;left:531.50px;top:275.48px;white-space:nowrap;font-family:'Liberation Sans',sans-serif;font-size:17.15px;line-height:17.15px;color:#111;font-weight:700;transform:scaleX(0.9853);transform-origin:left top;">5/2/2021 05:18 pm - 5/2/2021 06:54 pm</span>
<div style="position:absolute;left:525px;top:299.5px;width:314px;height:1px;background:#E2E6EA;"></div>
<span style="position:absolute;left:531.50px;top:309.48px;white-space:nowrap;font-family:'Liberation Sans',sans-serif;font-size:17.15px;line-height:17.15px;color:#111;font-weight:700;transform:scaleX(0.9853);transform-origin:left top;">5/2/2021 06:54 pm - 5/2/2021 08:24 pm</span>
<div style="position:absolute;left:525px;top:333.5px;width:314px;height:1px;background:#E2E6EA;"></div>
<span style="position:absolute;left:531.50px;top:343.48px;white-space:nowrap;font-family:'Liberation Sans',sans-serif;font-size:17.15px;line-height:17.15px;color:#111;font-weight:700;transform:scaleX(0.9853);transform-origin:left top;">5/2/2021 08:24 pm - 5/2/2021 08:54 pm</span>
<div style="position:absolute;left:525px;top:367.5px;width:314px;height:1px;background:#E2E6EA;"></div>
<span style="position:absolute;left:531.50px;top:377.48px;white-space:nowrap;font-family:'Liberation Sans',sans-serif;font-size:17.15px;line-height:17.15px;color:#111;font-weight:700;transform:scaleX(0.9853);transform-origin:left top;">5/2/2021 08:54 pm - 5/2/2021 09:34 pm</span>
<div style="position:absolute;left:525px;top:401.5px;width:314px;height:1px;background:#E2E6EA;"></div>
<span style="position:absolute;left:531.50px;top:411.48px;white-space:nowrap;font-family:'Liberation Sans',sans-serif;font-size:17.15px;line-height:17.15px;color:#111;font-weight:700;transform:scaleX(0.9853);transform-origin:left top;">5/2/2021 09:34 pm - 5/2/2021 10:34 pm</span>
<div style="position:absolute;left:525px;top:435.5px;width:314px;height:1px;background:#E2E6EA;"></div>
<span style="position:absolute;left:531.50px;top:445.48px;white-space:nowrap;font-family:'Liberation Sans',sans-serif;font-size:17.15px;line-height:17.15px;color:#111;font-weight:700;transform:scaleX(0.9885);transform-origin:left top;">5/2/2021 10:34 pm - 5/3/2021 02:34 am</span>
<div style="position:absolute;left:525px;top:469.5px;width:314px;height:1px;background:#E2E6EA;"></div>
<span style="position:absolute;left:531.50px;top:479.48px;white-space:nowrap;font-family:'Liberation Sans',sans-serif;font-size:17.15px;line-height:17.15px;color:#111;font-weight:700;transform:scaleX(0.9918);transform-origin:left top;">5/3/2021 02:34 am - 5/3/2021 04:04 am</span>
<div style="position:absolute;left:525px;top:503.5px;width:314px;height:1px;background:#E2E6EA;"></div>
<span style="position:absolute;left:536.00px;top:513.48px;white-space:nowrap;font-family:'Liberation Sans',sans-serif;font-size:17.15px;line-height:17.15px;color:#111;font-weight:700;transform:scaleX(0.9559);transform-origin:left top;">5/3/2021 04:04 am - Ends out of range</span>
<svg style="left:955px;top:308px" width="28" height="40" viewBox="0 0 28 40"><path d="M1.8 1.5 V35 L8.8 28 L13.5 37.5 L17.5 35.5 L13.2 25.2 L26 25.2 Z" fill="#fff" stroke="#111" stroke-width="1.7" stroke-linejoin="miter"/><path d="M1.8 3 V34" stroke="#777" stroke-width="2.4"/></svg>
<span style="position:absolute;left:516.44px;top:712.26px;white-space:nowrap;font-family:'Liberation Sans',sans-serif;font-size:14.10px;line-height:14.10px;color:#5A6B62;font-weight:400;transform:scaleX(1.0596);transform-origin:left top;">5/2/2021 1:38 PM</span>
<span style="position:absolute;left:639.96px;top:712.26px;white-space:nowrap;font-family:'Liberation Sans',sans-serif;font-size:14.10px;line-height:14.10px;color:#5A6B62;font-weight:400;text-decoration:underline;transform:scaleX(1.0370);transform-origin:left top;">PDT</span>
<span style="position:absolute;left:1425.94px;top:712.26px;white-space:nowrap;font-family:'Liberation Sans',sans-serif;font-size:14.10px;line-height:14.10px;color:#5A6B62;font-weight:400;transform:scaleX(1.0578);transform-origin:left top;">5/3/2021 5:23 AM</span>
<span style="position:absolute;left:1549.69px;top:712.26px;white-space:nowrap;font-family:'Liberation Sans',sans-serif;font-size:14.10px;line-height:14.10px;color:#5A6B62;font-weight:400;text-decoration:underline;transform:scaleX(1.0111);transform-origin:left top;">PDT</span>
<span style="position:absolute;left:928.66px;top:712.42px;white-space:nowrap;font-family:'Liberation Sans',sans-serif;font-size:14.39px;line-height:14.39px;color:#5F7568;font-weight:400;transform:scaleX(1.0418);transform-origin:left top;">15.7 hours</span>
<svg style="left:858px;top:711px" width="20" height="18" viewBox="0 0 20 18"><path d="M10 0 L0 9 L10 18Z M20 0 L10 9 L20 18Z" fill="#3E7558"/></svg>
<svg style="left:899px;top:711px" width="10" height="18" viewBox="0 0 10 18"><path d="M10 0 L0 9 L10 18Z" fill="#3E7558"/></svg>
<svg style="left:1020px;top:711px" width="10" height="18" viewBox="0 0 10 18"><path d="M0 0 L10 9 L0 18Z" fill="#3E7558"/></svg>
<svg style="left:1051px;top:711px" width="20" height="18" viewBox="0 0 20 18"><path d="M0 0 L10 9 L0 18Z M10 0 L20 9 L10 18Z" fill="#3E7558"/></svg>
<svg style="left:1090px;top:711px" width="13" height="18" viewBox="0 0 13 18"><path d="M0 0 L9.5 9 L0 18Z" fill="#3E7558"/><rect x="9.8" y="0" width="2.6" height="18" fill="#3E7558"/></svg>
<svg style="left:1125.5px;top:713.5px" width="13" height="12" viewBox="0 0 13 12"><path d="M11 4.5 A5 5 0 0 0 2 4" fill="none" stroke="#3E7558" stroke-width="2.2"/><path d="M13 0.5 V6 H7.5Z" fill="#3E7558"/><path d="M2 7.5 A5 5 0 0 0 11 8" fill="none" stroke="#3E7558" stroke-width="2.2"/><path d="M0 11.5 V6 H5.5Z" fill="#3E7558"/></svg>
<div style="position:absolute;left:497px;top:738px;width:654px;height:290px;background:#FDFDFB;"></div>
<div style="position:absolute;left:1150px;top:738px;width:1px;height:290px;background:#CFCFCF;"></div>
<div style="position:absolute;left:1151px;top:738px;width:9px;height:290px;background:#F2F2F2;"></div>
<div style="position:absolute;left:1160px;top:738px;width:1px;height:290px;background:#D2D2D2;"></div>
<div style="position:absolute;left:497px;top:738px;width:653px;height:36px;background:#477C63;"></div>
<svg style="left:510px;top:747.5px" width="22" height="16" viewBox="0 0 22 16"><path d="M1.2 0 V14.8 H21" fill="none" stroke="#fff" stroke-width="2"/><path d="M3 13 V4 L7.8 1.2 L13.5 7 L17.5 4 L20 13Z" fill="#fff"/></svg>
<span style="position:absolute;left:533.99px;top:748.85px;white-space:nowrap;font-family:'Liberation Sans',sans-serif;font-size:16.72px;line-height:16.72px;color:#fff;font-weight:400;transform:scaleX(1.0100);transform-origin:left top;">Details</span>
<div style="position:absolute;left:1039.5px;top:741.5px;width:103px;height:29px;background:#fff;border-radius:4px;"></div>
<svg style="left:1047.5px;top:746.5px" width="19" height="17" viewBox="0 0 19 17"><g fill="#2A2A2E"><circle cx="6.3" cy="8.5" r="4.6"/><circle cx="15" cy="3.4" r="2.6"/><circle cx="15" cy="13" r="2.6"/></g><g stroke="#2A2A2E"><path d="M6.3 2.2 V14.8 M0 8.5 H12.6 M1.8 4 L10.8 13 M10.8 4 L1.8 13" stroke-width="2.3"/><path d="M15 0 V6.8 M11.6 3.4 H18.4 M12.6 1 L17.4 5.8 M17.4 1 L12.6 5.8 M15 9.6 V16.4 M11.6 13 H18.4 M12.6 10.6 L17.4 15.4 M17.4 10.6 L12.6 15.4" stroke-width="1.3"/></g><circle cx="6.3" cy="8.5" r="2.1" fill="#fff"/><circle cx="15" cy="3.4" r="1.2" fill="#fff"/><circle cx="15" cy="13" r="1.2" fill="#fff"/></svg>
<span style="position:absolute;left:1068.56px;top:749.32px;white-space:nowrap;font-family:'Liberation Sans',sans-serif;font-size:14.97px;line-height:14.97px;color:#2A2A2E;font-weight:400;transform:scaleX(0.9420);transform-origin:left top;">Customize</span>
<div style="position:absolute;left:497px;top:809px;width:653px;height:1.5px;background:#D5DEE8;"></div>
<svg style="left:588px;top:789.5px" width="12.5" height="12" viewBox="0 0 12.5 12"><path d="M1.5 1.5 L11 10.5 M11 1.5 L1.5 10.5" stroke="#41785B" stroke-width="3"/></svg>
<svg style="left:615px;top:787px" width="15.5" height="15.5" viewBox="0 0 15.5 15.5"><rect x="0" y="0" width="15.5" height="15.5" rx="2.5" fill="#222"/><path d="M3.5 7.8 L6.5 10.8 L12 4.8" fill="none" stroke="#fff" stroke-width="2.3"/></svg>
<svg style="left:682.5px;top:787.5px" width="11" height="14" viewBox="0 0 11 14"><path d="M5.5 0 L11 5.5 H0Z M0 8.5 H11 L5.5 14Z" fill="#6B6B6B"/></svg>
<span style="position:absolute;left:701.60px;top:787.72px;white-space:nowrap;font-family:'Liberation Sans',sans-serif;font-size:16.86px;line-height:16.86px;color:#111;font-weight:700;">Name</span>
<svg style="left:758px;top:787.5px" width="11" height="14" viewBox="0 0 11 14"><path d="M5.5 0 L11 5.5 H0Z M0 8.5 H11 L5.5 14Z" fill="#6B6B6B"/></svg>
<span style="position:absolute;left:884.40px;top:787.72px;white-space:nowrap;font-family:'Liberation Sans',sans-serif;font-size:16.86px;line-height:16.86px;color:#111;font-weight:700;transform:scaleX(0.9568);transform-origin:left top;">Color</span>
<svg style="left:936.5px;top:787.5px" width="11" height="14" viewBox="0 0 11 14"><path d="M5.5 0 L11 5.5 H0Z M0 8.5 H11 L5.5 14Z" fill="#6B6B6B"/></svg>
<span style="position:absolute;left:956.00px;top:787.72px;white-space:nowrap;font-family:'Liberation Sans',sans-serif;font-size:16.86px;line-height:16.86px;color:#111;font-weight:700;transform:scaleX(0.9018);transform-origin:left top;">Assets</span>
<span style="position:absolute;left:1078.73px;top:787.72px;white-space:nowrap;font-family:'Liberation Sans',sans-serif;font-size:16.86px;line-height:16.86px;color:#41785B;font-weight:700;transform:scaleX(0.9711);transform-origin:left top;">Lane</span>
<svg style="left:1127px;top:786px" width="11" height="6" viewBox="0 0 11 6"><path d="M5.5 0 L11 6 H0Z" fill="#41785B"/></svg>
<div style="position:absolute;left:497px;top:810.5px;width:653px;height:30px;background:#F4F5F7;"></div>
<div style="position:absolute;left:497px;top:839.5px;width:653px;height:1px;background:#DDE3EA;"></div>
<svg style="left:502.5px;top:815.7px" width="18" height="15" viewBox="0 0 18 15"><path d="M11 1.2 H2.5 Q1 1.2 1 2.7 V12.5 Q1 14 2.5 14 H12 Q13.5 14 13.5 12.5 V9" fill="none" stroke="#41785B" stroke-width="1.3"/><path d="M6 10.5 L6.8 7.5 L14 0.5 L16.5 3 L9.3 10 Z" fill="none" stroke="#41785B" stroke-width="1.2"/><path d="M12.6 1.8 L15.2 4.3" stroke="#41785B" stroke-width="1.2"/></svg>
<svg style="left:531px;top:816.2px" width="18" height="18" viewBox="0 0 18 18"><path d="M17 1 C13 1.2 10 3 7.5 6 L2.2 8.2 L0.6 10.8 L5.2 11.2 L6.9 16.8 L9 14.8 L11.6 12.2 C14.6 9.6 16.8 6 17 1 Z" fill="#41785B"/><circle cx="14" cy="4" r="1.25" fill="#fff"/></svg>
<svg style="left:559.5px;top:815.7px" width="15.5" height="15.5" viewBox="0 0 16 16"><circle cx="8" cy="8" r="8" fill="#41785B"/><circle cx="8" cy="4" r="1.6" fill="#fff"/><path d="M5.5 6.5 H9.3 V11.8 H10.8 V13.2 H5.5 V11.8 H7 V7.9 H5.5Z" fill="#fff"/></svg>
<svg style="left:588px;top:817.7px" width="12.5" height="12" viewBox="0 0 12.5 12"><path d="M1.5 1.5 L11 10.5 M11 1.5 L1.5 10.5" stroke="#41785B" stroke-width="3"/></svg>
<div style="position:absolute;left:615px;top:818.2px;width:14px;height:13.8px;border:1.5px solid #222;border-radius:2.5px;box-sizing:border-box;background:transparent;"></div>
<span style="position:absolute;left:647.00px;top:816.16px;white-space:nowrap;font-family:'Liberation Serif',sans-serif;font-size:21.08px;line-height:21.08px;color:#4B57A4;font-weight:700;transform:scaleX(1.1333);transform-origin:left top;">A</span>
<span style="position:absolute;left:701.64px;top:818.72px;white-space:nowrap;font-family:'Liberation Sans',sans-serif;font-size:16.86px;line-height:16.86px;color:#111;font-weight:700;transform:scaleX(0.9604);transform-origin:left top;">Phase</span>
<div style="position:absolute;left:905.5px;top:817.5px;width:20.5px;height:20.5px;background:#4A559E;border:1.5px solid #222;box-sizing:border-box;"></div>
<span style="position:absolute;left:955.23px;top:818.97px;white-space:nowrap;font-family:'Liberation Sans',sans-serif;font-size:16.57px;line-height:16.57px;color:#41785B;font-weight:400;text-decoration:underline;transform:scaleX(0.9692);transform-origin:left top;">Site 1 Reactor 1</span>
<span style="position:absolute;left:1128.50px;top:818.97px;white-space:nowrap;font-family:'Liberation Sans',sans-serif;font-size:16.57px;line-height:16.57px;color:#111;font-weight:400;">1</span>
<div style="position:absolute;left:497px;top:840.5px;width:653px;height:30px;background:#FDFDFB;"></div>
<div style="position:absolute;left:497px;top:869.5px;width:653px;height:1px;background:#DDE3EA;"></div>
<svg style="left:502.5px;top:845.7px" width="18" height="15" viewBox="0 0 18 15"><path d="M11 1.2 H2.5 Q1 1.2 1 2.7 V12.5 Q1 14 2.5 14 H12 Q13.5 14 13.5 12.5 V9" fill="none" stroke="#41785B" stroke-width="1.3"/><path d="M6 10.5 L6.8 7.5 L14 0.5 L16.5 3 L9.3 10 Z" fill="none" stroke="#41785B" stroke-width="1.2"/><path d="M12.6 1.8 L15.2 4.3" stroke="#41785B" stroke-width="1.2"/></svg>
<svg style="left:531px;top:846.2px" width="18" height="18" viewBox="0 0 18 18"><path d="M17 1 C13 1.2 10 3 7.5 6 L2.2 8.2 L0.6 10.8 L5.2 11.2 L6.9 16.8 L9 14.8 L11.6 12.2 C14.6 9.6 16.8 6 17 1 Z" fill="#41785B"/><circle cx="14" cy="4" r="1.25" fill="#fff"/></svg>
<svg style="left:559.5px;top:845.7px" width="15.5" height="15.5" viewBox="0 0 16 16"><circle cx="8" cy="8" r="8" fill="#41785B"/><circle cx="8" cy="4" r="1.6" fill="#fff"/><path d="M5.5 6.5 H9.3 V11.8 H10.8 V13.2 H5.5 V11.8 H7 V7.9 H5.5Z" fill="#fff"/></svg>
<svg style="left:588px;top:847.7px" width="12.5" height="12" viewBox="0 0 12.5 12"><path d="M1.5 1.5 L11 10.5 M11 1.5 L1.5 10.5" stroke="#41785B" stroke-width="3"/></svg>
<div style="position:absolute;left:615px;top:848.2px;width:14px;height:13.8px;border:1.5px solid #222;border-radius:2.5px;box-sizing:border-box;background:transparent;"></div>
<svg style="left:646.5px;top:845.2px" width="20" height="17" viewBox="0 0 20 17"><path d="M0.8 9.8 L4.9 1 L9.9 12.8 L12.4 6.9 L15.5 16 L19.3 9.8" fill="none" stroke="#4D8A55" stroke-width="1.9"/></svg>
<span style="position:absolute;left:675.48px;top:848.85px;white-space:nowrap;font-family:'Liberation Sans',sans-serif;font-size:16.72px;line-height:16.72px;color:#222;font-weight:400;transform:scaleX(0.9176);transform-origin:left top;">°C</span>
<span style="position:absolute;left:701.61px;top:848.72px;white-space:nowrap;font-family:'Liberation Sans',sans-serif;font-size:16.86px;line-height:16.86px;color:#111;font-weight:700;transform:scaleX(0.9886);transform-origin:left top;">Reactor Temperature</span>
<div style="position:absolute;left:905.5px;top:847.5px;width:20.5px;height:20.5px;background:#4B8B52;border:1.5px solid #222;box-sizing:border-box;"></div>
<span style="position:absolute;left:955.23px;top:848.97px;white-space:nowrap;font-family:'Liberation Sans',sans-serif;font-size:16.57px;line-height:16.57px;color:#41785B;font-weight:400;text-decoration:underline;transform:scaleX(0.9692);transform-origin:left top;">Site 1 Reactor 1</span>
<span style="position:absolute;left:1128.50px;top:848.97px;white-space:nowrap;font-family:'Liberation Sans',sans-serif;font-size:16.57px;line-height:16.57px;color:#111;font-weight:400;">2</span>
<div style="position:absolute;left:497px;top:870.5px;width:653px;height:30px;background:#F4F5F7;"></div>
<div style="position:absolute;left:497px;top:899.5px;width:653px;height:1px;background:#DDE3EA;"></div>
<svg style="left:502.5px;top:875.7px" width="18" height="15" viewBox="0 0 18 15"><path d="M11 1.2 H2.5 Q1 1.2 1 2.7 V12.5 Q1 14 2.5 14 H12 Q13.5 14 13.5 12.5 V9" fill="none" stroke="#41785B" stroke-width="1.3"/><path d="M6 10.5 L6.8 7.5 L14 0.5 L16.5 3 L9.3 10 Z" fill="none" stroke="#41785B" stroke-width="1.2"/><path d="M12.6 1.8 L15.2 4.3" stroke="#41785B" stroke-width="1.2"/></svg>
<svg style="left:531px;top:876.2px" width="18" height="18" viewBox="0 0 18 18"><path d="M17 1 C13 1.2 10 3 7.5 6 L2.2 8.2 L0.6 10.8 L5.2 11.2 L6.9 16.8 L9 14.8 L11.6 12.2 C14.6 9.6 16.8 6 17 1 Z" fill="#41785B"/><circle cx="14" cy="4" r="1.25" fill="#fff"/></svg>
<svg style="left:559.5px;top:875.7px" width="15.5" height="15.5" viewBox="0 0 16 16"><circle cx="8" cy="8" r="8" fill="#41785B"/><circle cx="8" cy="4" r="1.6" fill="#fff"/><path d="M5.5 6.5 H9.3 V11.8 H10.8 V13.2 H5.5 V11.8 H7 V7.9 H5.5Z" fill="#fff"/></svg>
<svg style="left:588px;top:877.7px" width="12.5" height="12" viewBox="0 0 12.5 12"><path d="M1.5 1.5 L11 10.5 M11 1.5 L1.5 10.5" stroke="#41785B" stroke-width="3"/></svg>
<div style="position:absolute;left:615px;top:878.2px;width:14px;height:13.8px;border:1.5px solid #222;border-radius:2.5px;box-sizing:border-box;background:transparent;"></div>
<svg style="left:647px;top:874.7px" width="17.5" height="17.5" viewBox="0 0 19 19"><rect x="0.9" y="0.9" width="17.2" height="17.2" fill="#fff" stroke="#5B78C4" stroke-width="1.8"/><rect x="0" y="0" width="19" height="9.5" fill="#5B78C4"/><path d="M6 4.8 L8.5 7 L13.5 2.3" fill="none" stroke="#fff" stroke-width="1.6"/><path d="M6.8 11.8 L12.2 16.2 M12.2 11.8 L6.8 16.2" stroke="#5B78C4" stroke-width="1.4"/></svg>
<span style="position:absolute;left:675.48px;top:878.85px;white-space:nowrap;font-family:'Liberation Sans',sans-serif;font-size:16.72px;line-height:16.72px;color:#222;font-weight:400;transform:scaleX(0.9176);transform-origin:left top;">°C</span>
<span style="position:absolute;left:701.63px;top:878.72px;white-space:nowrap;font-family:'Liberation Sans',sans-serif;font-size:16.86px;line-height:16.86px;color:#111;font-weight:700;transform:scaleX(0.9661);transform-origin:left top;">Max Temp per Phase</span>
<div style="position:absolute;left:905.5px;top:877.5px;width:20.5px;height:20.5px;background:#5B78C4;border:1.5px solid #222;box-sizing:border-box;"></div>
<span style="position:absolute;left:955.23px;top:878.97px;white-space:nowrap;font-family:'Liberation Sans',sans-serif;font-size:16.57px;line-height:16.57px;color:#41785B;font-weight:400;text-decoration:underline;transform:scaleX(0.9692);transform-origin:left top;">Site 1 Reactor 1</span>
<span style="position:absolute;left:1128.50px;top:878.97px;white-space:nowrap;font-family:'Liberation Sans',sans-serif;font-size:16.57px;line-height:16.57px;color:#111;font-weight:400;">2</span>
<div style="position:absolute;left:497px;top:900.5px;width:653px;height:30px;background:#F9F8E6;"></div>
<svg style="left:502.5px;top:905.7px" width="18" height="15" viewBox="0 0 18 15"><path d="M11 1.2 H2.5 Q1 1.2 1 2.7 V12.5 Q1 14 2.5 14 H12 Q13.5 14 13.5 12.5 V9" fill="none" stroke="#41785B" stroke-width="1.3"/><path d="M6 10.5 L6.8 7.5 L14 0.5 L16.5 3 L9.3 10 Z" fill="none" stroke="#41785B" stroke-width="1.2"/><path d="M12.6 1.8 L15.2 4.3" stroke="#41785B" stroke-width="1.2"/></svg>
<svg style="left:531px;top:906.2px" width="18" height="18" viewBox="0 0 18 18"><path d="M17 1 C13 1.2 10 3 7.5 6 L2.2 8.2 L0.6 10.8 L5.2 11.2 L6.9 16.8 L9 14.8 L11.6 12.2 C14.6 9.6 16.8 6 17 1 Z" fill="#41785B"/><circle cx="14" cy="4" r="1.25" fill="#fff"/></svg>
<svg style="left:559.5px;top:905.7px" width="15.5" height="15.5" viewBox="0 0 16 16"><circle cx="8" cy="8" r="8" fill="#41785B"/><circle cx="8" cy="4" r="1.6" fill="#fff"/><path d="M5.5 6.5 H9.3 V11.8 H10.8 V13.2 H5.5 V11.8 H7 V7.9 H5.5Z" fill="#fff"/></svg>
<svg style="left:588px;top:907.7px" width="12.5" height="12" viewBox="0 0 12.5 12"><path d="M1.5 1.5 L11 10.5 M11 1.5 L1.5 10.5" stroke="#41785B" stroke-width="3"/></svg>
<svg style="left:615px;top:907.7px" width="15.5" height="15.5" viewBox="0 0 15.5 15.5"><rect x="0" y="0" width="15.5" height="15.5" rx="2.5" fill="#222"/><path d="M3.5 7.8 L6.5 10.8 L12 4.8" fill="none" stroke="#fff" stroke-width="2.3"/></svg>
<svg style="left:648.5px;top:903.7px" width="15.5" height="19" viewBox="0 0 15 18"><rect x="0" y="0" width="7" height="18" rx="1.3" fill="#8C5E42"/><rect x="8" y="0" width="7" height="18" rx="1.3" fill="#8C5E42"/><path d="M0.6 12.5 L3.5 2.2 L7 16.5 L8.3 12 L11.2 2.2 L14.5 16" fill="none" stroke="#fff" stroke-width="1.3"/></svg>
<span style="position:absolute;left:701.66px;top:908.72px;white-space:nowrap;font-family:'Liberation Sans',sans-serif;font-size:16.86px;line-height:16.86px;color:#111;font-weight:700;transform:scaleX(0.9421);transform-origin:left top;">phases</span>
<div style="position:absolute;left:905.5px;top:907.5px;width:20.5px;height:20.5px;background:#8C5E42;border:1.5px solid #222;box-sizing:border-box;"></div>
<span style="position:absolute;left:955.23px;top:908.97px;white-space:nowrap;font-family:'Liberation Sans',sans-serif;font-size:16.57px;line-height:16.57px;color:#41785B;font-weight:400;text-decoration:underline;transform:scaleX(0.9692);transform-origin:left top;">Site 1 Reactor 1</span>
<div style="position:absolute;left:497px;top:1017px;width:652px;height:12px;background:#E4E4E4;border-radius:6px;"></div>
<div style="position:absolute;left:497px;top:1017px;width:557px;height:12px;background:#D3D3D3;border-radius:6px;"></div>
<div style="position:absolute;left:1153px;top:878px;width:1.6px;height:11px;background:#9A9A9A;"></div>
<div style="position:absolute;left:1156.5px;top:878px;width:1.6px;height:11px;background:#9A9A9A;"></div>
<div style="position:absolute;left:1161px;top:738px;width:438px;height:290px;background:#FDFDFB;"></div>
<div style="position:absolute;left:1160px;top:738px;width:439px;height:36px;background:#477C63;"></div>
<svg style="left:1177px;top:746px" width="14" height="19" viewBox="0 0 14 19"><path d="M3.5 1 H1 V18 H3.5 M10.5 1 H13 V18 H10.5" fill="none" stroke="#fff" stroke-width="2"/><path d="M4 15 V3.5 L5.6 11 L7 5 L8.4 11 L10 3.5 V15" fill="none" stroke="#fff" stroke-width="1.3"/></svg>
<span style="position:absolute;left:1197.01px;top:748.85px;white-space:nowrap;font-family:'Liberation Sans',sans-serif;font-size:16.72px;line-height:16.72px;color:#fff;font-weight:400;transform:scaleX(0.9853);transform-origin:left top;">Capsules</span>
<div style="position:absolute;left:1532.5px;top:741.5px;width:59px;height:29px;background:#fff;border-radius:4px;"></div>
<div style="position:absolute;left:1562.5px;top:743px;width:1px;height:26px;background:#D0D0D0;"></div>
<svg style="left:1540px;top:747px" width="17" height="17" viewBox="0 0 17 17"><circle cx="7.3" cy="7.4" r="5.6" fill="none" stroke="#2A2A2E" stroke-width="2.2"/><path d="M11.3 11.4 L15.8 15.8" stroke="#2A2A2E" stroke-width="2.6" stroke-linecap="round"/><path d="M7.3 4.6 V10.2 M4.5 7.4 H10.1" stroke="#2A2A2E" stroke-width="1.3"/></svg>
<svg style="left:1571px;top:747.5px" width="14" height="14" viewBox="0 0 14 14"><rect x="0.6" y="0.6" width="12.8" height="12.6" rx="2.2" fill="none" stroke="#2A2A2E" stroke-width="1.2"/><path d="M2.8 6.8 H11.2" stroke="#2A2A2E" stroke-width="1.2"/></svg>
<div style="position:absolute;left:1161px;top:814px;width:425px;height:1.5px;background:#D5DEE8;"></div>
<div style="position:absolute;left:1169.5px;top:792px;width:14.5px;height:14.5px;border:1.5px solid #222;border-radius:2.5px;box-sizing:border-box;background:#fff;"></div>
<span style="position:absolute;left:1230.80px;top:792.14px;white-space:nowrap;font-family:'Liberation Sans',sans-serif;font-size:16.13px;line-height:16.13px;color:#41785B;font-weight:700;transform:scaleX(1.0324);transform-origin:left top;">Start</span>
<svg style="left:1279.5px;top:793px" width="11" height="5.5" viewBox="0 0 11 5.5"><path d="M5.5 0 L11 5.5 H0Z" fill="#41785B"/></svg>
<span style="position:absolute;left:1409.30px;top:792.14px;white-space:nowrap;font-family:'Liberation Sans',sans-serif;font-size:16.13px;line-height:16.13px;color:#111;font-weight:700;transform:scaleX(1.0095);transform-origin:left top;">Value</span>
<svg style="left:1462px;top:792.5px" width="11" height="14" viewBox="0 0 11 14"><path d="M5.5 0 L11 5.5 H0Z M0 8.5 H11 L5.5 14Z" fill="#6B6B6B"/></svg>
<svg style="left:1490px;top:784px" width="23" height="20" viewBox="0 0 23 20"><rect x="0.6" y="0.6" width="19" height="16" rx="1.5" fill="#fff" stroke="#333" stroke-width="1.2"/><rect x="10.6" y="0.6" width="9" height="16" fill="#C8C8C8" stroke="#333" stroke-width="1.2"/><path d="M0.6 6 H10.6 M0.6 11.3 H10.6" stroke="#333" stroke-width="1"/><circle cx="17.5" cy="14.5" r="4.5" fill="#333"/><path d="M17.5 12 V17 M15 14.5 H20" stroke="#fff" stroke-width="1.5"/></svg>
<div style="position:absolute;left:1522px;top:778px;width:1px;height:31px;background:#DADADA;"></div>
<svg style="left:1547px;top:784px" width="23" height="20" viewBox="0 0 23 20"><rect x="0.6" y="0.6" width="19" height="16" rx="1.5" fill="#fff" stroke="#5B6FC0" stroke-width="1.2"/><rect x="10.6" y="0.6" width="9" height="16" fill="#C8C8C8" stroke="#5B6FC0" stroke-width="1.2"/><path d="M0.6 6 H10.6 M0.6 11.3 H10.6" stroke="#5B6FC0" stroke-width="1"/><circle cx="17.5" cy="14.5" r="4.5" fill="#5B6FC0"/><path d="M17.5 12 V17 M15 14.5 H20" stroke="#fff" stroke-width="1.5"/></svg>
<div style="position:absolute;left:1161px;top:815px;width:425px;height:30px;background:#F3F4F5;"></div>
<div style="position:absolute;left:1161px;top:844px;width:425px;height:1px;background:#DCDDDE;"></div>
<svg style="left:1169px;top:823px" width="15" height="15" viewBox="0 0 15 15"><circle cx="7.5" cy="7.5" r="6.3" fill="none" stroke="#BDBDBD" stroke-width="2"/><path d="M3 12 L12 3" stroke="#BDBDBD" stroke-width="2"/></svg>
<svg style="left:1204px;top:819px" width="14" height="19" viewBox="0 0 14 19"><path d="M3.8 0.8 H0.9 V18.2 H3.8 M10.2 0.8 H13.1 V18.2 H10.2" fill="none" stroke="#A87442" stroke-width="1.7"/><path d="M4.2 4 L5.6 14.5 L7 7 L8.4 14.5 L9.8 4" fill="none" stroke="#A87442" stroke-width="1.1"/></svg>
<span style="position:absolute;left:1229.79px;top:823.47px;white-space:nowrap;font-family:'Liberation Sans',sans-serif;font-size:16.57px;line-height:16.57px;color:#111;font-weight:400;transform:scaleX(1.0059);transform-origin:left top;">Starts off-screen</span>
<span style="position:absolute;left:1409.04px;top:823.47px;white-space:nowrap;font-family:'Liberation Sans',sans-serif;font-size:16.57px;line-height:16.57px;color:#111;font-weight:400;transform:scaleX(0.9559);transform-origin:left top;">Phase 3</span>
<div style="position:absolute;left:1161px;top:845px;width:425px;height:30px;background:#FDFDFB;"></div>
<div style="position:absolute;left:1161px;top:874px;width:425px;height:1px;background:#DCDDDE;"></div>
<div style="position:absolute;left:1169.5px;top:852.5px;width:14px;height:14px;border:1.5px solid #222;border-radius:2.5px;box-sizing:border-box;background:transparent;"></div>
<svg style="left:1204px;top:849px" width="14" height="19" viewBox="0 0 14 19"><path d="M3.8 0.8 H0.9 V18.2 H3.8 M10.2 0.8 H13.1 V18.2 H10.2" fill="none" stroke="#A87442" stroke-width="1.7"/><path d="M4.2 4 L5.6 14.5 L7 7 L8.4 14.5 L9.8 4" fill="none" stroke="#A87442" stroke-width="1.1"/></svg>
<span style="position:absolute;left:1229.86px;top:853.47px;white-space:nowrap;font-family:'Liberation Sans',sans-serif;font-size:16.57px;line-height:16.57px;color:#111;font-weight:400;transform:scaleX(0.9385);transform-origin:left top;">May 2, 2021 4:32 PM</span>
<span style="position:absolute;left:1409.06px;top:853.47px;white-space:nowrap;font-family:'Liberation Sans',sans-serif;font-size:16.57px;line-height:16.57px;color:#111;font-weight:400;transform:scaleX(0.9400);transform-origin:left top;">Phase 4</span>
<div style="position:absolute;left:1161px;top:875px;width:425px;height:30px;background:#F3F4F5;"></div>
<div style="position:absolute;left:1161px;top:904px;width:425px;height:1px;background:#DCDDDE;"></div>
<div style="position:absolute;left:1169.5px;top:882.5px;width:14px;height:14px;border:1.5px solid #222;border-radius:2.5px;box-sizing:border-box;background:transparent;"></div>
<svg style="left:1204px;top:879px" width="14" height="19" viewBox="0 0 14 19"><path d="M3.8 0.8 H0.9 V18.2 H3.8 M10.2 0.8 H13.1 V18.2 H10.2" fill="none" stroke="#A87442" stroke-width="1.7"/><path d="M4.2 4 L5.6 14.5 L7 7 L8.4 14.5 L9.8 4" fill="none" stroke="#A87442" stroke-width="1.1"/></svg>
<span style="position:absolute;left:1229.86px;top:883.47px;white-space:nowrap;font-family:'Liberation Sans',sans-serif;font-size:16.57px;line-height:16.57px;color:#111;font-weight:400;transform:scaleX(0.9385);transform-origin:left top;">May 2, 2021 5:18 PM</span>
<span style="position:absolute;left:1409.04px;top:883.47px;white-space:nowrap;font-family:'Liberation Sans',sans-serif;font-size:16.57px;line-height:16.57px;color:#111;font-weight:400;transform:scaleX(0.9559);transform-origin:left top;">Phase 5</span>
<div style="position:absolute;left:1161px;top:905px;width:425px;height:30px;background:#FDFDFB;"></div>
<div style="position:absolute;left:1161px;top:934px;width:425px;height:1px;background:#DCDDDE;"></div>
<div style="position:absolute;left:1169.5px;top:912.5px;width:14px;height:14px;border:1.5px solid #222;border-radius:2.5px;box-sizing:border-box;background:transparent;"></div>
<svg style="left:1204px;top:909px" width="14" height="19" viewBox="0 0 14 19"><path d="M3.8 0.8 H0.9 V18.2 H3.8 M10.2 0.8 H13.1 V18.2 H10.2" fill="none" stroke="#A87442" stroke-width="1.7"/><path d="M4.2 4 L5.6 14.5 L7 7 L8.4 14.5 L9.8 4" fill="none" stroke="#A87442" stroke-width="1.1"/></svg>
<span style="position:absolute;left:1229.86px;top:913.47px;white-space:nowrap;font-family:'Liberation Sans',sans-serif;font-size:16.57px;line-height:16.57px;color:#111;font-weight:400;transform:scaleX(0.9385);transform-origin:left top;">May 2, 2021 6:54 PM</span>
<span style="position:absolute;left:1409.04px;top:913.47px;white-space:nowrap;font-family:'Liberation Sans',sans-serif;font-size:16.57px;line-height:16.57px;color:#111;font-weight:400;transform:scaleX(0.9559);transform-origin:left top;">Phase 1</span>
<div style="position:absolute;left:1161px;top:935px;width:425px;height:30px;background:#F3F4F5;"></div>
<div style="position:absolute;left:1161px;top:964px;width:425px;height:1px;background:#DCDDDE;"></div>
<div style="position:absolute;left:1169.5px;top:942.5px;width:14px;height:14px;border:1.5px solid #222;border-radius:2.5px;box-sizing:border-box;background:transparent;"></div>
<svg style="left:1204px;top:939px" width="14" height="19" viewBox="0 0 14 19"><path d="M3.8 0.8 H0.9 V18.2 H3.8 M10.2 0.8 H13.1 V18.2 H10.2" fill="none" stroke="#A87442" stroke-width="1.7"/><path d="M4.2 4 L5.6 14.5 L7 7 L8.4 14.5 L9.8 4" fill="none" stroke="#A87442" stroke-width="1.1"/></svg>
<span style="position:absolute;left:1229.86px;top:943.47px;white-space:nowrap;font-family:'Liberation Sans',sans-serif;font-size:16.57px;line-height:16.57px;color:#111;font-weight:400;transform:scaleX(0.9385);transform-origin:left top;">May 2, 2021 8:24 PM</span>
<span style="position:absolute;left:1409.04px;top:943.47px;white-space:nowrap;font-family:'Liberation Sans',sans-serif;font-size:16.57px;line-height:16.57px;color:#111;font-weight:400;transform:scaleX(0.9559);transform-origin:left top;">Phase 2</span>
<div style="position:absolute;left:1161px;top:965px;width:425px;height:30px;background:#FDFDFB;"></div>
<div style="position:absolute;left:1161px;top:994px;width:425px;height:1px;background:#DCDDDE;"></div>
<div style="position:absolute;left:1169.5px;top:972.5px;width:14px;height:14px;border:1.5px solid #222;border-radius:2.5px;box-sizing:border-box;background:transparent;"></div>
<svg style="left:1204px;top:969px" width="14" height="19" viewBox="0 0 14 19"><path d="M3.8 0.8 H0.9 V18.2 H3.8 M10.2 0.8 H13.1 V18.2 H10.2" fill="none" stroke="#A87442" stroke-width="1.7"/><path d="M4.2 4 L5.6 14.5 L7 7 L8.4 14.5 L9.8 4" fill="none" stroke="#A87442" stroke-width="1.1"/></svg>
<span style="position:absolute;left:1229.86px;top:973.47px;white-space:nowrap;font-family:'Liberation Sans',sans-serif;font-size:16.57px;line-height:16.57px;color:#111;font-weight:400;transform:scaleX(0.9385);transform-origin:left top;">May 2, 2021 8:54 PM</span>
<span style="position:absolute;left:1409.04px;top:973.47px;white-space:nowrap;font-family:'Liberation Sans',sans-serif;font-size:16.57px;line-height:16.57px;color:#111;font-weight:400;transform:scaleX(0.9559);transform-origin:left top;">Phase 3</span>
<div style="position:absolute;left:1161px;top:995px;width:425px;height:30px;background:#F3F4F5;"></div>
<div style="position:absolute;left:1161px;top:1024px;width:425px;height:1px;background:#DCDDDE;"></div>
<div style="position:absolute;left:1169.5px;top:1002.5px;width:14px;height:14px;border:1.5px solid #222;border-radius:2.5px;box-sizing:border-box;background:transparent;"></div>
<svg style="left:1204px;top:999px" width="14" height="19" viewBox="0 0 14 19"><path d="M3.8 0.8 H0.9 V18.2 H3.8 M10.2 0.8 H13.1 V18.2 H10.2" fill="none" stroke="#A87442" stroke-width="1.7"/><path d="M4.2 4 L5.6 14.5 L7 7 L8.4 14.5 L9.8 4" fill="none" stroke="#A87442" stroke-width="1.1"/></svg>
<span style="position:absolute;left:1229.86px;top:1003.47px;white-space:nowrap;font-family:'Liberation Sans',sans-serif;font-size:16.57px;line-height:16.57px;color:#111;font-weight:400;transform:scaleX(0.9385);transform-origin:left top;">May 2, 2021 9:34 PM</span>
<span style="position:absolute;left:1409.06px;top:1003.47px;white-space:nowrap;font-family:'Liberation Sans',sans-serif;font-size:16.57px;line-height:16.57px;color:#111;font-weight:400;transform:scaleX(0.9400);transform-origin:left top;">Phase 4</span>
<div style="position:absolute;left:1586px;top:774px;width:13px;height:254px;background:#FDFDFB;"></div>
<div style="position:absolute;left:1587px;top:774px;width:11px;height:243px;background:#E4E4E4;border-radius:6px;"></div>
<div style="position:absolute;left:1587px;top:774px;width:11px;height:173px;background:#D3D3D3;border-radius:6px;"></div>
<div style="position:absolute;left:1161px;top:1017px;width:425px;height:12px;background:#E4E4E4;border-radius:6px;"></div>
<div style="position:absolute;left:1161px;top:1017px;width:386px;height:12px;background:#D3D3D3;border-radius:6px;"></div>
<div style="position:absolute;left:1599px;top:0px;width:1px;height:1028px;background:#000;"></div>
</body></html>
